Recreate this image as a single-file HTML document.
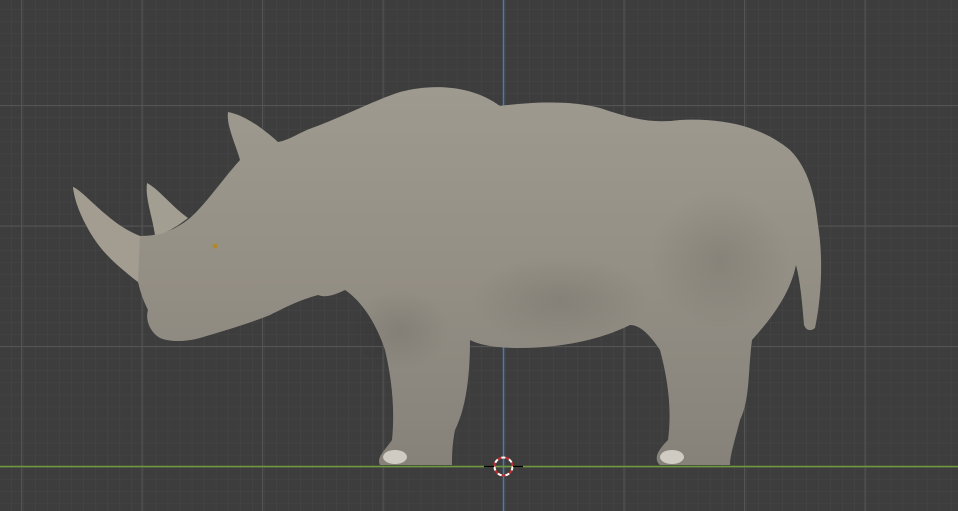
<!DOCTYPE html>
<html><head><meta charset="utf-8"><style>
html,body{margin:0;padding:0;width:958px;height:511px;overflow:hidden;background:#3d3d3d}
</style></head><body>
<svg width="958" height="511" viewBox="0 0 958 511" xmlns="http://www.w3.org/2000/svg">
<defs>
<pattern id="minor" x="11" y="9" width="12.05" height="12.05" patternUnits="userSpaceOnUse">
<path d="M0 0H12.05M0 0V12.05" stroke="#464646" stroke-width="1" fill="none"/>
</pattern>
<pattern id="major" x="21" y="105" width="120.5" height="120.5" patternUnits="userSpaceOnUse">
<path d="M0.5 0V120.5M0 0.5H120.5" stroke="#545454" stroke-width="1.2" fill="none"/>
</pattern>
<linearGradient id="skin" x1="0" y1="0" x2="0" y2="1">
<stop offset="0" stop-color="#9e9a90"/>
<stop offset="0.5" stop-color="#948f85"/>
<stop offset="1" stop-color="#86827a"/>
</linearGradient>
<radialGradient id="sh" cx="0.5" cy="0.5" r="0.5">
<stop offset="0" stop-color="#000" stop-opacity="0.09"/>
<stop offset="1" stop-color="#000" stop-opacity="0"/>
</radialGradient>
</defs>
<rect width="958" height="511" fill="#3d3d3d"/>
<rect width="958" height="511" fill="url(#minor)"/>
<rect width="958" height="511" fill="url(#major)"/>
<line x1="503.5" y1="0" x2="503.5" y2="511" stroke="#4a7ab0" stroke-width="1.5"/>
<line x1="0" y1="466.5" x2="958" y2="466.5" stroke="#6f9a3a" stroke-width="1.5"/>
<path d="M73 187 C85 192 110 225 140 236 C160 236 175 230 190 218 C205 205 222 180 240 160 C236 145 226 125 228 112 C245 115 265 130 278 142 C290 140 300 132 312 128 C340 118 375 100 400 92 C430 84 470 84 500 106 C530 102 570 100 600 108 C630 118 650 124 680 120 C720 118 760 125 790 150 C808 168 815 195 818 225 C823 255 822 295 815 328 C810 332 806 330 804 325 C802 300 800 280 796 265 C790 295 770 320 752 340 C748 370 750 400 740 420 C735 440 730 455 730 465 L660 465 C652 458 660 448 668 440 C672 410 668 380 660 350 C650 335 640 325 630 325 C600 340 560 348 520 348 C495 348 480 345 470 340 C470 380 465 410 455 430 C452 445 452 458 452 465 L380 465 C376 458 385 450 392 440 C395 410 392 380 385 350 C375 320 360 300 345 290 C335 295 325 298 318 295 C300 300 290 305 270 315 C245 325 220 332 200 338 C185 342 170 342 160 338 C150 332 145 320 148 310 C142 298 140 290 138 282 C120 268 105 255 95 240 C85 225 75 205 73 187 Z" fill="url(#skin)"/>
<path d="M147 183 C160 190 170 205 188 218 C175 228 165 234 155 235 C152 215 145 198 147 183 Z" fill="#a39e92"/>
<path d="M73 187 C85 192 110 225 140 236 L138 282 C120 268 105 255 95 240 C85 225 75 205 73 187 Z" fill="#a39d91"/>
<ellipse cx="560" cy="300" rx="90" ry="45" fill="url(#sh)"/>
<ellipse cx="720" cy="260" rx="70" ry="70" fill="url(#sh)"/>
<ellipse cx="400" cy="330" rx="50" ry="40" fill="url(#sh)"/>
<ellipse cx="395" cy="457" rx="12" ry="7" fill="#cfcbc2"/>
<ellipse cx="672" cy="457" rx="12" ry="7" fill="#cfcbc2"/>
<circle cx="215" cy="246" r="2.5" fill="#b08a2a"/>
<circle cx="503.5" cy="466.5" r="9" fill="none" stroke="#c03030" stroke-width="2"/>
<circle cx="503.5" cy="466.5" r="9" fill="none" stroke="#fff" stroke-width="2" stroke-dasharray="4 4"/>
<line x1="484" y1="466.5" x2="494" y2="466.5" stroke="#000" stroke-width="1.5"/>
<line x1="513" y1="466.5" x2="523" y2="466.5" stroke="#000" stroke-width="1.5"/>
</svg>
</body></html>
